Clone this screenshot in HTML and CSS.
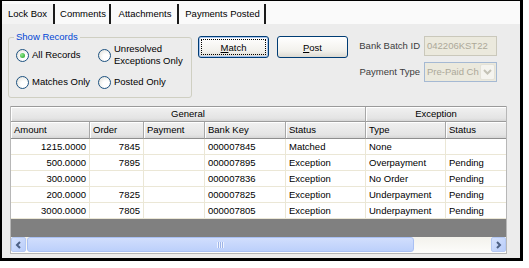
FILE: index.html
```html
<!DOCTYPE html>
<html lang="en">
<head>
    <meta charset="UTF-8">
    <title>Lock Box</title>
    <link rel="stylesheet" href="styles.css">
</head>
<body>
    <div class="window">
        <div class="tabs">
            <div class="tab active">Lock Box</div>
            <div class="tab tab-comments">Comments</div>
            <div class="tab tab-attach">Attachments</div>
            <div class="tab tab-posted">Payments Posted</div>
        </div>

        <div class="panel">
            <div class="top">
                <fieldset class="records">
                    <legend>Show Records</legend>
                    <div class="options">
                        <label class="opt"><span class="radio checked"></span><span>All Records</span></label>
                        <label class="opt"><span class="radio"></span><span>Unresolved<br>Exceptions Only</span></label>
                        <label class="opt"><span class="radio"></span><span>Matches Only</span></label>
                        <label class="opt"><span class="radio"></span><span>Posted Only</span></label>
                    </div>
                </fieldset>

                <div class="actions">
                    <button class="btn focused"><u>M</u>atch</button>
                    <button class="btn"><u>P</u>ost</button>
                </div>

                <div class="fields">
                    <span class="field-label">Bank Batch ID</span>
                    <div class="input">042206KST22</div>
                    <span class="field-label">Payment Type</span>
                    <div class="select">
                        <span class="select-text">Pre-Paid Ch</span>
                        <span class="drop">
                            <svg width="9" height="6" viewBox="0 0 9 6"><path d="M1 1 L4.5 4.5 L8 1" fill="none" stroke="#c4c2b6" stroke-width="2"/></svg>
                        </span>
                    </div>
                </div>
            </div>

            <div class="grid">
                <div class="row group-row">
                    <div class="hcell center">General</div>
                    <div class="hcell center">Exception</div>
                </div>
                <div class="row head-row">
                    <div class="hcell">Amount</div>
                    <div class="hcell">Order</div>
                    <div class="hcell">Payment</div>
                    <div class="hcell">Bank Key</div>
                    <div class="hcell">Status</div>
                    <div class="hcell">Type</div>
                    <div class="hcell">Status</div>
                </div>
                <div id="rows"></div>
                <div class="empty"></div>
                <div class="hscroll">
                    <span class="sbtn">
                        <svg width="7" height="8" viewBox="0 0 7 8"><path d="M5 1 L2 4 L5 7" fill="none" stroke="#4d6185" stroke-width="2"/></svg>
                    </span>
                    <span class="thumb"><span class="grip"></span></span>
                    <span class="track"></span>
                    <span class="sbtn">
                        <svg width="7" height="8" viewBox="0 0 7 8"><path d="M2 1 L5 4 L2 7" fill="none" stroke="#4d6185" stroke-width="2"/></svg>
                    </span>
                </div>
            </div>
        </div>
    </div>

    <script>
        const records = [
            ['1215.0000', '7845', '', '000007845', 'Matched', 'None', ''],
            ['500.0000', '7895', '', '000007895', 'Exception', 'Overpayment', 'Pending'],
            ['300.0000', '', '', '000007836', 'Exception', 'No Order', 'Pending'],
            ['200.0000', '7825', '', '000007825', 'Exception', 'Underpayment', 'Pending'],
            ['3000.0000', '7805', '', '000007805', 'Exception', 'Underpayment', 'Pending']
        ];

        const rowsDiv = document.getElementById('rows');

        records.forEach(function(rec) {
            const row = document.createElement('div');
            row.classList.add('row', 'data-row');
            rec.forEach(function(value, i) {
                const cell = document.createElement('div');
                cell.classList.add('cell');
                // amount and order are right aligned
                if (i < 2) cell.classList.add('num');
                cell.textContent = value;
                row.appendChild(cell);
            });
            rowsDiv.appendChild(row);
        });
    </script>
</body>
</html>
```

FILE: styles.css
```css
body {
    margin: 0;
    background: #ffffff;
    font-family: 'Liberation Sans', Arial, sans-serif;
    font-size: 9.5px;
    color: #000;
}

.window {
    width: 518px;
    height: 257px;
    border-style: solid;
    border-color: #000;
    border-width: 1px 3px 3px 2px;
    display: flex;
    flex-direction: column;
}

/* tab strip */

.tabs {
    height: 23px;
    box-sizing: border-box;
    padding-top: 3px;
    display: flex;
    background: #fafafa;
}

.tab {
    height: 20px;
    line-height: 20px;
    box-sizing: border-box;
    border-right: 2px solid #1b1b1b;
    text-align: center;
}

.tab.active {
    width: 53px;
    background: #f3f3f3;
}

.tab-comments { width: 56px; padding-left: 2px; }
.tab-attach { width: 68px; padding-left: 2px; }
.tab-posted { width: 87px; padding-left: 2px; }

/* panel */

.panel {
    flex: 1;
    background: #ececec;
}

.top {
    display: flex;
    align-items: flex-start;
    padding: 7px 0 0 6px;
    height: 74px;
    box-sizing: border-box;
}

.records {
    margin: 0;
    width: 184px;
    box-sizing: border-box;
    border: 1px solid #cfcfc2;
    border-radius: 3px;
    padding: 0 4px 3px 7px;
}

.records legend {
    color: #0046d5;
    line-height: 12px;
    padding: 0 2px;
    margin-left: -2px;
}

.options {
    display: grid;
    grid-template-columns: 82px 1fr;
    grid-auto-rows: 24px;
    row-gap: 3px;
}

.opt {
    display: flex;
    align-items: center;
    gap: 3px;
    line-height: 12px;
}

.radio {
    width: 13px;
    height: 13px;
    box-sizing: border-box;
    border-radius: 50%;
    border: 1px solid #1c5180;
    background: radial-gradient(circle at 65% 65%, #ffffff 30%, #dcdcd4 100%);
    flex-shrink: 0;
    position: relative;
}

.radio.checked::after {
    content: "";
    position: absolute;
    left: 3px;
    top: 3px;
    width: 5px;
    height: 5px;
    border-radius: 50%;
    background: radial-gradient(circle at 35% 35%, #8ee88e, #21a121);
}

.actions {
    display: flex;
    gap: 8px;
    margin: 5px 0 0 6px;
}

.btn {
    width: 71px;
    height: 22px;
    padding: 0;
    font-family: inherit;
    font-size: 9.5px;
    color: #000;
    border: 1px solid #003c74;
    border-radius: 3px;
    background: linear-gradient(#ffffff, #f2f1ec 70%, #dcdad2);
}

.btn.focused {
    box-shadow: inset 0 0 0 1px #a8c5ee;
    outline: 1px dotted #000;
    outline-offset: -4px;
}

.fields {
    display: grid;
    grid-template-columns: 66px 73px;
    grid-auto-rows: 20px;
    column-gap: 4px;
    row-gap: 6px;
    margin: 5px 0 0 6px;
}

.field-label {
    text-align: right;
    line-height: 20px;
    color: #3c3c3c;
    white-space: nowrap;
}

.input, .select {
    box-sizing: border-box;
    background: #ebe9dd;
    color: #aca899;
    line-height: 18px;
    white-space: nowrap;
}

.input {
    border: 1px solid #cac8bb;
    padding-left: 2px;
}

.select {
    border: 1px solid #a5b9d3;
    display: flex;
    align-items: center;
}

.select-text {
    flex: 1;
    padding-left: 2px;
}

.drop {
    width: 15px;
    height: 16px;
    margin-right: 1px;
    box-sizing: border-box;
    border: 1px solid #e4e2d8;
    border-radius: 2px;
    background: #f5f4ef;
    display: flex;
    align-items: center;
    justify-content: center;
}

/* data grid */

.grid {
    width: 497px;
    margin: 8px 0 0 8px;
    box-sizing: border-box;
    border: 1px solid #b7b7b7;
    background: #fff;
}

.row {
    display: grid;
    grid-template-columns: 79px 54px 61px 81px 80px 80px 60px;
}

.group-row {
    grid-template-columns: 355px 140px;
    height: 15px;
    border-top: 1px solid #9a9a9a;
    margin-top: -1px;
}

.hcell {
    box-sizing: border-box;
    background: linear-gradient(#f1f1f1, #e4e4e4 80%, #d6d6d6);
    border-right: 1px solid #a7a7a7;
    border-bottom: 1px solid #9c9c9c;
    box-shadow: inset 1px 1px 0 #ffffff;
    padding-left: 3px;
    white-space: nowrap;
    overflow: hidden;
}

.hcell:last-child {
    border-right: none;
}

.group-row .hcell {
    line-height: 14px;
}

.head-row {
    height: 17px;
}

.head-row .hcell {
    line-height: 16px;
    border-bottom-color: #8e8e8e;
}

.hcell.center {
    text-align: center;
    padding-left: 0;
}

.data-row {
    height: 16px;
}

.cell {
    box-sizing: border-box;
    border-right: 1px solid #ebe7d6;
    border-bottom: 1px solid #ebe7d6;
    padding: 0 3px;
    line-height: 15px;
    white-space: nowrap;
}

.cell:last-child {
    border-right: none;
}

.cell.num {
    text-align: right;
}

.empty {
    height: 18px;
    background: #808080;
}

.hscroll {
    height: 16px;
    display: flex;
    background: linear-gradient(#f3f2ec, #fdfdfb);
}

.sbtn {
    width: 15px;
    height: 15px;
    box-sizing: border-box;
    border: 1px solid #b4c8f3;
    border-radius: 2px;
    background: linear-gradient(135deg, #d6e2fd, #b9cdfa);
    display: flex;
    align-items: center;
    justify-content: center;
}

.thumb {
    width: 387px;
    height: 15px;
    margin-left: 1px;
    box-sizing: border-box;
    border: 1px solid #a9c0f3;
    border-radius: 3px;
    background: linear-gradient(#d1defd, #bcd0fb);
    display: flex;
    align-items: center;
    justify-content: center;
}

.grip {
    width: 7px;
    height: 6px;
    background: repeating-linear-gradient(90deg, #eef3fe 0 1px, #9db4e8 1px 2px);
}

.track {
    flex: 1;
}
```
